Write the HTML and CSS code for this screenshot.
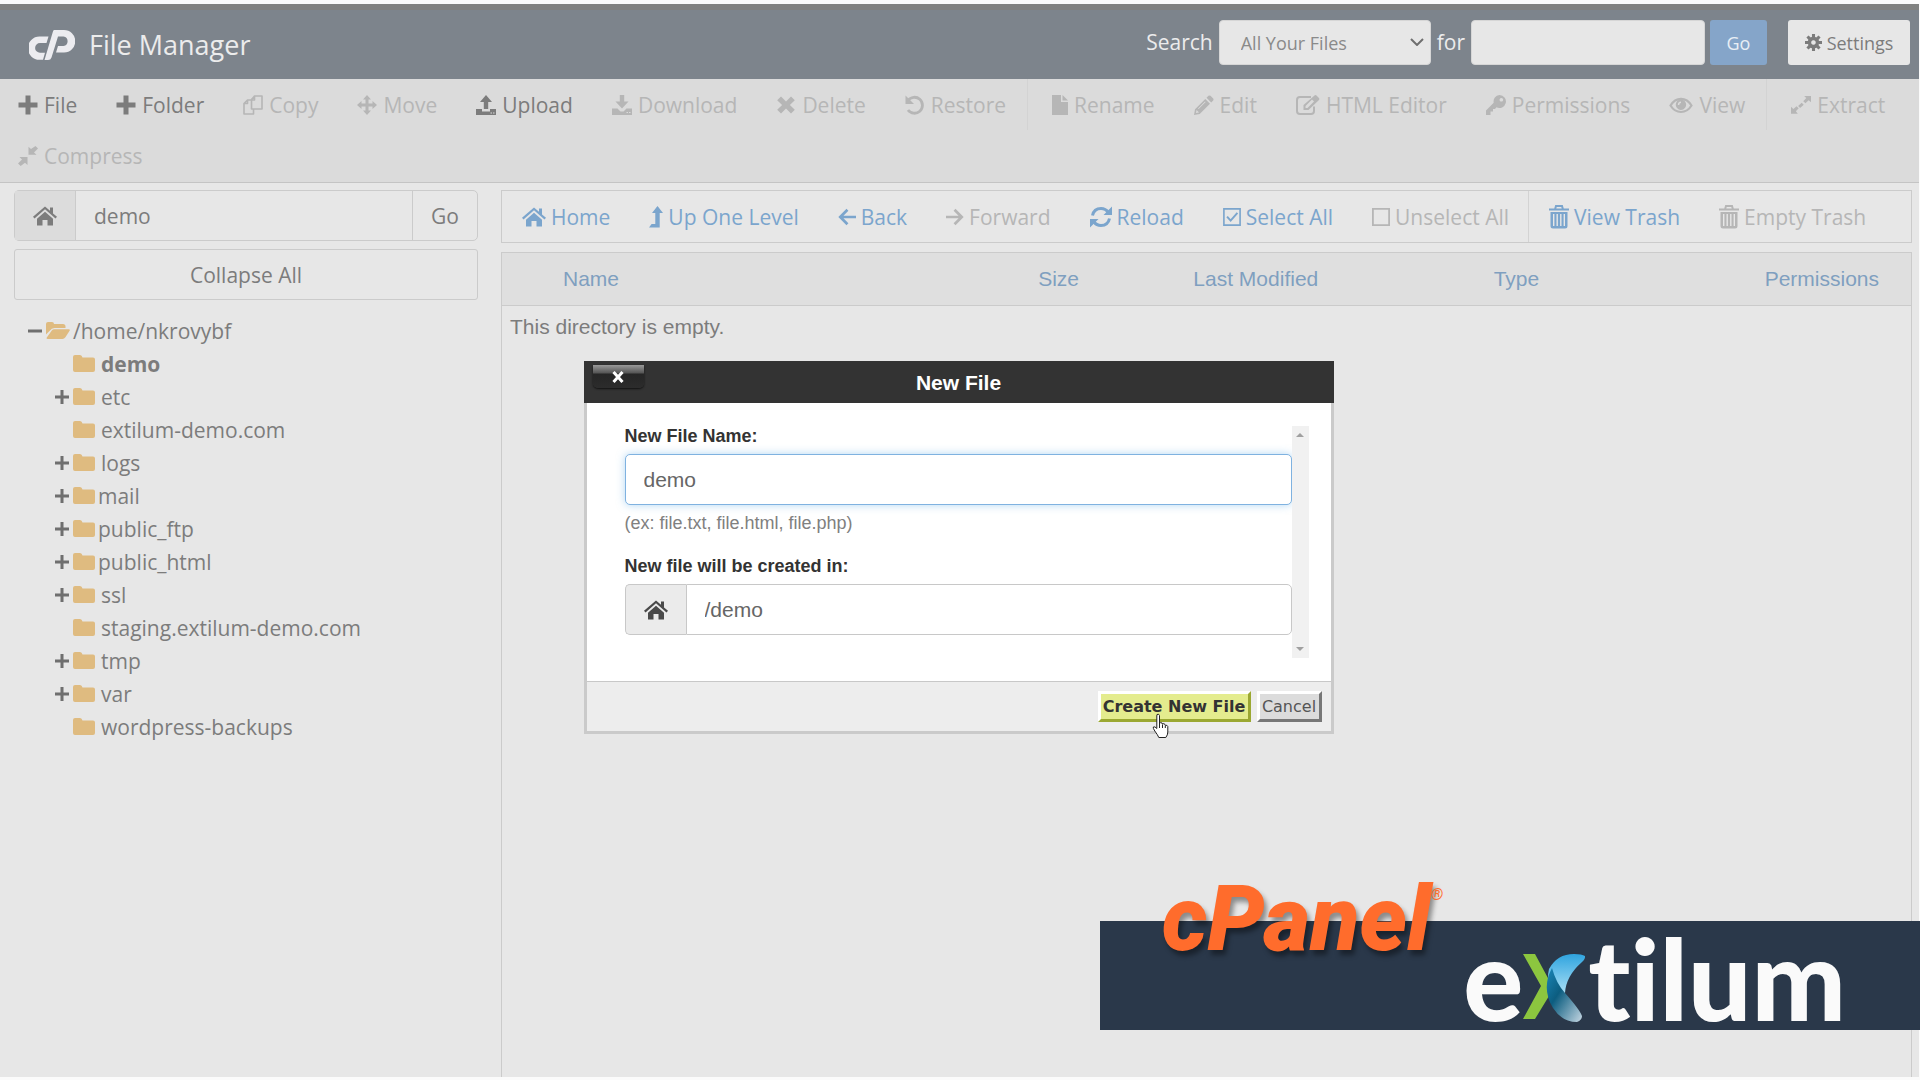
FILE: index.html
```
<!DOCTYPE html>
<html lang="en">
<head>
  <meta charset="UTF-8" />
  <meta name="viewport" content="width=device-width, initial-scale=1.0" />
  <title>cPanel File Manager</title>
  <link rel="stylesheet" href="styles.css">
</head>
<body>
  <!-- icon set -->
  <svg class="sprite" aria-hidden="true">
    <symbol id="i-plus" viewBox="0 0 20 20"><path d="M7.5 0.5h5v7h7v5h-7v7h-5v-7h-7v-5h7z"/></symbol>
    <symbol id="i-copy" viewBox="0 0 20 20"><path fill="none" stroke="currentColor" stroke-width="1.6" stroke-linejoin="round" d="M11.5 1h7.500v13h-10.500v-9.500zM11.500 1v4h-3.500M8 5h-3.500l-3.500 3.500v10.500h9.500v-4.500M4.500 5v3.500h-3.500"/></symbol>
    <symbol id="i-move" viewBox="0 0 20 20"><path d="M10 0l4 4.500h-2.500v4h4v-2.500l4.500 4-4.500 4v-2.500h-4v4h2.500l-4 4.500-4-4.500h2.500v-4h-4v2.500l-4.500-4 4.500-4v2.500h4v-4h-2.500z"/></symbol>
    <symbol id="i-upload" viewBox="0 0 20 20"><path d="M10 0l6 7h-3.800v7h-4.400v-7h-3.800zM0 14h6v2.500h8v-2.500h6v6h-20zM14.500 17.500h1.500v1h-1.500zM17 17.500h1.500v1h-1.500z" fill-rule="evenodd"/></symbol>
    <symbol id="i-download" viewBox="0 0 20 20"><path d="M7.800 0h4.400v6.500h4.300l-6.500 7-6.500-7h4.300zM0 13.500h5.500l3 3h3l3-3h5.500v6.500h-20zM14.500 17h1.500v1h-1.500zM17 17h1.500v1h-1.500z" fill-rule="evenodd"/></symbol>
    <symbol id="i-times" viewBox="0 0 20 20"><path d="M5 1.500l5 5 5-5 3.800 3.800-4.900 4.700 4.900 4.700-3.800 3.800-5-5-5 5-3.800-3.800 4.900-4.700-4.900-4.700z"/></symbol>
    <symbol id="i-undo" viewBox="0 0 20 20"><path fill="none" stroke="currentColor" stroke-width="2.800" d="M3 5.500a8 8 0 1 1 0 9.500"/><path d="M0.500 0.500v8.500h8.500z"/></symbol>
    <symbol id="i-file" viewBox="0 0 16 20"><path d="M0 0h9v7h7v13h-16zM10.500 0l5.500 5.500h-5.500z"/></symbol>
    <symbol id="i-pencil" viewBox="0 0 20 20"><path d="M14.500 0.800q1-0.800 2 0l2.700 2.700q0.800 1 0 2l-2 2-4.700-4.700zM11.300 4l4.700 4.700-10.300 10.300-5.700 1 1-5.700zM2.600 15l-0.700 3.100 3.100-0.700zM11 6.500l-7 7 0.600 0.600 7-7z" fill-rule="evenodd"/></symbol>
    <symbol id="i-edit" viewBox="0 0 24 20"><path fill="none" stroke="currentColor" stroke-width="2" d="M15 2h-11q-3 0-3 3v11q0 3 3 3h11q3 0 3-3v-4.500"/><path d="M18.500 0.500q1-0.800 2 0l2.500 2.500q0.700 1 0 2l-10.500 10h-5v-5zM9.500 11v2h2l6.500-6.500-2-2z" fill-rule="evenodd"/></symbol>
    <symbol id="i-key" viewBox="0 0 20 20"><path d="M13.500 0a6.500 6.500 0 1 1-3 12.300l-1.500 1.700h-2v2.500h-2.500v3.500h-4.500v-4.500l7.700-7.700a6.500 6.500 0 0 1 5.800-7.800zM15.300 3a1.800 1.800 0 1 0 0.100 0z" fill-rule="evenodd"/></symbol>
    <symbol id="i-eye" viewBox="0 0 24 20"><path fill="none" stroke="currentColor" stroke-width="2.200" d="M1.500 10.500q4-6.700 10.500-6.700t10.500 6.700q-4 6.500-10.500 6.500t-10.500-6.500z"/><path d="M12 4.500a5.200 5.200 0 1 1-0.100 0zM12 6.500q-3.200 0.200-3.200 3.500h1.500q0-1.900 1.700-2z" fill-rule="evenodd"/></symbol>
    <symbol id="i-expand" viewBox="0 0 22 20"><path d="M14.500 0h7.500v7l-2.600-2.300-3.500 3.500-2.400-2.300 3.300-3.500zM6.100 11.300l2.400 2.400-3.200 3.300 2.200 2.500h-7.500v-7.500l2.600 2.300zM11.800 7.500l2.200 2.100-4 3.600-2.200-2.100z"/></symbol>
    <symbol id="i-compress" viewBox="0 0 20 20"><path d="M17.500 0l2.500 2.500-4 4 2.500 2.300h-8v-8l2.500 2.200zM1.500 11h8v8l-2.500-2.300-4.300 3.300-2.700-2.500 4-4z"/></symbol>
    <symbol id="i-home" viewBox="0 0 24 20"><path d="M12 0.500l5 4.300v-3.300h3v5.900l4 3.400-1.500 1.700-10.500-9.200-10.500 9.200-1.500-1.700zM12 5.800l8 7v6.700h-5.500v-5.500h-5v5.500h-5.500v-6.700z"/></symbol>
    <symbol id="i-up" viewBox="0 0 14 22"><path d="M8.500 0l5.500 7h-3.300v14.500h-10.700l2.600-3.500h3.700v-11h-3.300z"/></symbol>
    <symbol id="i-left" viewBox="0 0 20 20"><path fill="none" stroke="currentColor" stroke-width="3" d="M20 10h-17M10.500 2l-8 8 8 8"/></symbol>
    <symbol id="i-right" viewBox="0 0 20 20"><path fill="none" stroke="currentColor" stroke-width="3" d="M0 10h17M9.500 2l8 8-8 8"/></symbol>
    <symbol id="i-reload" viewBox="0 0 22 22"><path fill="none" stroke="currentColor" stroke-width="3" d="M2.500 9.500q1.500-7 8.500-7 4.500 0 7.500 4M19.500 12.500q-1.500 7-8.500 7-4.500 0-7.500-4"/><path d="M22 0.500v8.500h-8.500zM0 21.500v-8.500h8.500z"/></symbol>
    <symbol id="i-checked" viewBox="0 0 20 20"><path fill="none" stroke="currentColor" stroke-width="1.800" d="M1 1h18v18h-18z"/><path fill="none" stroke="currentColor" stroke-width="2.200" d="M4.500 9.500l4 4.500 7.500-8.500"/></symbol>
    <symbol id="i-box" viewBox="0 0 20 20"><path fill="none" stroke="currentColor" stroke-width="2" d="M1 1h18v18h-18z"/></symbol>
    <symbol id="i-trash" viewBox="0 0 20 24"><path fill="none" stroke="currentColor" stroke-width="2" d="M0 4.500h20M6 4.500l1-3.500h6l1 3.500"/><path d="M1.500 7h17v14q0 2.500-2.500 2.500h-12q-2.500 0-2.500-2.500zM4 9v12h1.400v-12zM7.500 9v12h1.400v-12zM11.100 9v12h1.400v-12zM14.600 9v12h1.400v-12z" fill-rule="evenodd"/></symbol>
    <symbol id="i-cog" viewBox="0 0 20 20"><path fill="none" stroke="currentColor" stroke-width="4.200" d="M10 5.200a4.800 4.800 0 1 1-0.100 0z"/><path fill="none" stroke="currentColor" stroke-width="3.600" d="M10 0v4M10 16v4M0 10h4M16 10h4M2.900 2.900l2.800 2.800M14.300 14.300l2.800 2.800M17.100 2.900l-2.800 2.800M2.900 17.100l2.800-2.800"/></symbol>
    <symbol id="i-folder" viewBox="0 0 22 17"><path d="M0 2q0-2 2-2h5q2 0 2.500 2.500h10.500q2 0 2 2v10.500q0 2-2 2h-18q-2 0-2-2z"/></symbol>
    <symbol id="i-folder-open" viewBox="0 0 24 17"><path d="M0 12.500v-10.500q0-2 2-2h4q2 0 2 2h9q2.500 0 2.500 2.500v1.500h-11q-3 0-4.500 2.500zM0.800 15.500l5-7q1-1.200 2.500-1.200h14.500q1.600 0 0.800 1.500l-4.200 6.500q-1.200 1.700-3 1.700h-14.500q-2 0-1.100-1.500z"/></symbol>
    <symbol id="i-minus-s" viewBox="0 0 14 14"><path d="M0 5.500h14v3h-14z"/></symbol>
    <symbol id="i-plus-s" viewBox="0 0 14 14"><path d="M5.500 0h3v5.500h5.500v3h-5.500v5.500h-3v-5.500h-5.500v-3h5.500z"/></symbol>
  </svg>

  <header class="header">
    <div class="brand">
      <svg class="brand-logo" viewBox="0 0 46 30">
        <path d="M19.500 6.500l-2 6.500h-6.500a4.800 4.800 0 0 0 0 9.800h5l-2 7h-3.500a11.600 11.600 0 0 1 0-23.300z"/>
        <path d="M25 0h10a11.200 11.200 0 0 1 0 22.500h-8l2-6.500h5.500a4.800 4.800 0 0 0 0-9.500h-5.500l-6.500 21q-0.800 2.500-3.500 2.500h-3.500l8-27q0.700-3 1.500-3z"/>
      </svg>
      <h1>File Manager</h1>
    </div>
    <form class="search">
      <label for="scope">Search</label>
      <div class="select-wrap">
        <select id="scope"><option>All Your Files</option></select>
        <svg class="chevron" viewBox="0 0 14 8"><path d="M1 1l6 6 6-6"/></svg>
      </div>
      <label for="query">for</label>
      <input type="text" id="query" />
      <button type="button" class="btn-go">Go</button>
      <button type="button" class="btn-settings"><svg class="icon"><use href="#i-cog"/></svg>Settings</button>
    </form>
  </header>

  <nav class="toolbar">
    <button class="tool"><svg class="icon"><use href="#i-plus"/></svg>File</button>
    <button class="tool"><svg class="icon"><use href="#i-plus"/></svg>Folder</button>
    <button class="tool" disabled><svg class="icon"><use href="#i-copy"/></svg>Copy</button>
    <button class="tool" disabled><svg class="icon"><use href="#i-move"/></svg>Move</button>
    <button class="tool"><svg class="icon"><use href="#i-upload"/></svg>Upload</button>
    <button class="tool" disabled><svg class="icon"><use href="#i-download"/></svg>Download</button>
    <button class="tool" disabled><svg class="icon"><use href="#i-times"/></svg>Delete</button>
    <button class="tool" disabled><svg class="icon"><use href="#i-undo"/></svg>Restore</button>
    <span class="divider"></span>
    <button class="tool" disabled><svg class="icon narrow"><use href="#i-file"/></svg>Rename</button>
    <button class="tool" disabled><svg class="icon"><use href="#i-pencil"/></svg>Edit</button>
    <button class="tool" disabled><svg class="icon wide"><use href="#i-edit"/></svg>HTML Editor</button>
    <button class="tool" disabled><svg class="icon"><use href="#i-key"/></svg>Permissions</button>
    <button class="tool" disabled><svg class="icon wide"><use href="#i-eye"/></svg>View</button>
    <span class="divider"></span>
    <button class="tool" disabled><svg class="icon"><use href="#i-expand"/></svg>Extract</button>
    <button class="tool" disabled><svg class="icon"><use href="#i-compress"/></svg>Compress</button>
  </nav>

  <main class="main">
    <aside class="sidebar">
      <div class="path-group">
        <span class="addon"><svg class="icon wide"><use href="#i-home"/></svg></span>
        <input type="text" value="demo" aria-label="Path" />
        <button>Go</button>
      </div>
      <button class="collapse">Collapse All</button>

      <ul class="tree">
        <li class="root"><svg class="toggle"><use href="#i-minus-s"/></svg><svg class="folder open"><use href="#i-folder-open"/></svg><a href="#">/home/nkrovybf</a></li>
        <li><span class="toggle"></span><svg class="folder"><use href="#i-folder"/></svg><a href="#" class="current">demo</a></li>
        <li><svg class="toggle"><use href="#i-plus-s"/></svg><svg class="folder"><use href="#i-folder"/></svg><a href="#">etc</a></li>
        <li><span class="toggle"></span><svg class="folder"><use href="#i-folder"/></svg><a href="#">extilum-demo.com</a></li>
        <li><svg class="toggle"><use href="#i-plus-s"/></svg><svg class="folder"><use href="#i-folder"/></svg><a href="#">logs</a></li>
        <li class="special"><svg class="toggle"><use href="#i-plus-s"/></svg><svg class="folder"><use href="#i-folder"/></svg><a href="#">mail</a></li>
        <li class="special"><svg class="toggle"><use href="#i-plus-s"/></svg><svg class="folder"><use href="#i-folder"/></svg><a href="#">public_ftp</a></li>
        <li class="special"><svg class="toggle"><use href="#i-plus-s"/></svg><svg class="folder"><use href="#i-folder"/></svg><a href="#">public_html</a></li>
        <li><svg class="toggle"><use href="#i-plus-s"/></svg><svg class="folder"><use href="#i-folder"/></svg><a href="#">ssl</a></li>
        <li><span class="toggle"></span><svg class="folder"><use href="#i-folder"/></svg><a href="#">staging.extilum-demo.com</a></li>
        <li><svg class="toggle"><use href="#i-plus-s"/></svg><svg class="folder"><use href="#i-folder"/></svg><a href="#">tmp</a></li>
        <li><svg class="toggle"><use href="#i-plus-s"/></svg><svg class="folder"><use href="#i-folder"/></svg><a href="#">var</a></li>
        <li><span class="toggle"></span><svg class="folder"><use href="#i-folder"/></svg><a href="#">wordpress-backups</a></li>
      </ul>
    </aside>

    <section class="content">
      <div class="actions">
        <button class="tool"><svg class="icon wide"><use href="#i-home"/></svg>Home</button>
        <button class="tool"><svg class="icon slim"><use href="#i-up"/></svg>Up One Level</button>
        <button class="tool"><svg class="icon small"><use href="#i-left"/></svg>Back</button>
        <button class="tool" disabled><svg class="icon small"><use href="#i-right"/></svg>Forward</button>
        <button class="tool"><svg class="icon reload"><use href="#i-reload"/></svg>Reload</button>
        <button class="tool"><svg class="icon small"><use href="#i-checked"/></svg>Select All</button>
        <button class="tool" disabled><svg class="icon small"><use href="#i-box"/></svg>Unselect All</button>
        <span class="divider"></span>
        <button class="tool"><svg class="icon trash"><use href="#i-trash"/></svg>View Trash</button>
        <button class="tool" disabled><svg class="icon trash"><use href="#i-trash"/></svg>Empty Trash</button>
      </div>

      <div class="listing">
        <table>
          <thead>
            <tr>
              <th class="col-name">Name</th>
              <th class="col-size">Size</th>
              <th class="col-modified">Last Modified</th>
              <th class="col-type">Type</th>
              <th class="col-perms">Permissions</th>
            </tr>
          </thead>
          <tbody>
            <tr><td colspan="5">This directory is empty.</td></tr>
          </tbody>
        </table>
      </div>
    </section>
  </main>

  <div class="modal" role="dialog" aria-labelledby="modalTitle">
    <div class="modal-header">
      <button class="modal-close" aria-label="Close"><svg viewBox="0 0 12 12"><path d="M1.500 1l9 10M10.500 1l-9 10"/></svg></button>
      <h2 id="modalTitle">New File</h2>
    </div>
    <div class="modal-body">
      <div class="fields">
        <label for="fileName">New File Name:</label>
        <input type="text" id="fileName" class="field focused" value="demo" />
        <p class="hint">(ex: file.txt, file.html, file.php)</p>
        <label for="filePath">New file will be created in:</label>
        <div class="field-group">
          <span class="addon"><svg class="icon wide"><use href="#i-home"/></svg></span>
          <input type="text" id="filePath" class="field" value="/demo" />
        </div>
      </div>
      <div class="scrollbar"><i class="arrow-up"></i><i class="arrow-down"></i></div>
    </div>
    <div class="modal-footer">
      <button class="btn-create">Create New File</button>
      <button class="btn-cancel">Cancel</button>
    </div>
    <svg class="cursor" viewBox="0 0 18 26"><path d="M5 1.500q2-1 2.500 1v8q1-1.500 2.500-0.500l0.500 1q1.500-1 2.500 0.500l0.300 0.800q2-0.500 2.500 1.200v5.500q0 3-2 5.500h-7q-1-2.500-4-6.500-2-3-1.500-4 1.500-1 3.500 1.500v-12.500z"/><path d="M7.500 10v5M10.500 11.500v3.500M13.300 12.500v2.500"/></svg>
  </div>

  <div class="banner">
    <div class="banner-cpanel">cPanel<sup>®</sup></div>
    <div class="banner-extilum">
      <span>e</span>
      <svg class="banner-x" viewBox="0 0 63 68">
        <defs>
          <linearGradient id="gTop" x1="0" y1="0" x2="0" y2="1"><stop offset="0" stop-color="#2fa4df"/><stop offset="1" stop-color="#a9dff5"/></linearGradient>
          <linearGradient id="gLow" x1="0" y1="0" x2="1" y2="1"><stop offset="0" stop-color="#1a86b8"/><stop offset="0.400" stop-color="#0c5d80"/><stop offset="1" stop-color="#c4d6e2"/></linearGradient>
        </defs>
        <path fill="#8cc63f" d="M0 0h12l14 26v16l-14 23h-12l18-33z"/>
        <path fill="url(#gTop)" d="M62 2q0.500 3-3 6-16 14-17 31l-13-3q-6-10-3-21 8-15 25-15 8 0 11 2z"/>
        <path fill="url(#gLow)" d="M29 14q-11 20 1 40 9 14 24 14 5-2 5-6-2-6-17-23-9-10-13-25z"/>
      </svg>
      <span>tilum</span>
    </div>
  </div>
</body>
</html>
```
FILE: styles.css
```
* {
  margin: 0;
  padding: 0;
  box-sizing: border-box;
}

body {
  font-family: 'Open Sans', 'Noto Sans', sans-serif;
  font-size: 21px;
  background: #fbfbfb;
  color: #7c7c7c;
  height: 100vh;
  display: flex;
  flex-direction: column;
  padding: 4px 1px 3px 0;
  overflow: hidden;
}

button,
input,
select {
  font: inherit;
  color: inherit;
}

button {
  border: none;
  background: none;
}

.sprite {
  position: absolute;
  width: 0;
  height: 0;
}

.icon {
  width: 20px;
  height: 20px;
  flex: none;
  fill: currentColor;
}

.icon.wide {
  width: 24px;
}

.icon.narrow {
  width: 16px;
}

.icon.slim {
  width: 14px;
  height: 22px;
}

.icon.small {
  width: 18px;
  height: 18px;
}

.icon.reload {
  width: 22px;
  height: 22px;
}

.icon.trash {
  height: 24px;
}

/* header */
.header {
  display: flex;
  justify-content: space-between;
  align-items: center;
  height: 75px;
  padding: 0 9px 0 29px;
  background: #7d848c;
  border-top: 6px solid #808180;
  color: #ececec;
}

.brand {
  display: flex;
  align-items: center;
  gap: 14px;
}

.brand-logo {
  width: 46px;
  height: 30px;
  fill: #ececf0;
}

.brand h1 {
  font-size: 27px;
  font-weight: 400;
}

.search {
  display: flex;
  align-items: center;
  margin-bottom: 4px;
}

.search label {
  margin: 0 6px;
  padding-bottom: 2px;
  line-height: 24px;
}

.search select,
.search input {
  height: 45px;
  border: 1px solid #d6d6d6;
  border-radius: 4px;
  background: #e7e7e7;
}

.select-wrap {
  position: relative;
}

.search select {
  width: 212px;
  padding-left: 21px;
  font-size: 18px;
  color: #8a8a8a;
  appearance: none;
}

.chevron {
  position: absolute;
  right: 7px;
  top: 18px;
  width: 14px;
  height: 8px;
  fill: none;
  stroke: #6f6f6f;
  stroke-width: 2;
}

.search input {
  width: 234px;
}

.btn-go {
  width: 57px;
  height: 45px;
  margin-left: 5px;
  border-radius: 3px;
  background: #85a5c9;
  color: #e8eef5;
  font-size: 18px;
}

.btn-settings {
  display: flex;
  align-items: center;
  justify-content: center;
  gap: 5px;
  width: 122px;
  height: 45px;
  margin-left: 21px;
  border-radius: 3px;
  background: #e7e7e7;
  color: #7c7c7c;
  font-size: 18px;
}

.btn-settings .icon {
  width: 17px;
  height: 17px;
}

/* toolbars */
.toolbar {
  display: flex;
  flex-wrap: wrap;
  align-content: flex-start;
  min-height: 104px;
  background: #dbdbdb;
  border-bottom: 1px solid #c4c4c4;
}

.tool {
  display: flex;
  align-items: center;
  gap: 6px;
  height: 51px;
  padding: 0 21px 0 18px;
  white-space: nowrap;
}

.tool:disabled {
  color: #b6b6b6;
}

.divider {
  width: 1px;
  background: #d3d3d3;
}

.toolbar .divider {
  margin-right: 6px;
}

/* layout */
.main {
  flex: 1;
  display: flex;
  gap: 23px;
  padding: 7px 7px 0 14px;
  background: #e7e7e7;
}

.sidebar {
  width: 464px;
  flex: none;
}

.path-group {
  display: flex;
  height: 51px;
  border: 1px solid #cbcbcb;
  border-radius: 5px;
}

.addon {
  display: flex;
  align-items: center;
  justify-content: center;
  width: 61px;
  flex: none;
  background: #dcdcdc;
  border-right: 1px solid #cbcbcb;
}

.path-group input {
  flex: 1;
  min-width: 0;
  padding: 0 18px;
  border: none;
  background: none;
}

.path-group button {
  width: 65px;
  border-left: 1px solid #cbcbcb;
}

.collapse {
  display: block;
  width: 100%;
  height: 51px;
  margin-top: 8px;
  border: 1px solid #cbcbcb;
  border-radius: 3px;
}

.tree {
  list-style: none;
  margin-top: 14px;
}

.tree li {
  display: flex;
  align-items: center;
  height: 33px;
  padding-left: 41px;
}

.tree li.root {
  padding-left: 14px;
}

.tree a {
  color: inherit;
  text-decoration: none;
}

.toggle {
  width: 14px;
  height: 14px;
  margin-right: 4px;
  fill: #6f6f6f;
}

.folder {
  width: 22px;
  height: 17px;
  margin-right: 6px;
  fill: #dfbb80;
}

.folder.open {
  width: 24px;
  margin-right: 3px;
}

.special .folder {
  margin-right: 3px;
}

.tree .current {
  font-weight: 700;
}

/* directory listing */
.content {
  flex: 1;
  display: flex;
  flex-direction: column;
}

.actions {
  display: flex;
  border: 1px solid #cbcbcb;
  color: #7ba5cd;
}

.actions .tool {
  gap: 5px;
  padding: 0 19px 0 20px;
}

.listing {
  flex: 1;
  margin-top: 9px;
  border: 1px solid #cbcbcb;
  border-bottom: none;
  font-family: 'Liberation Sans', Arial, sans-serif;
}

.listing table {
  width: 100%;
  border-collapse: collapse;
  table-layout: fixed;
}

.listing th {
  height: 52px;
  background: #dfdfdf;
  border-bottom: 1px solid #cbcbcb;
  color: #7f9fc0;
  font-weight: 400;
}

.listing th.col-name {
  width: 34%;
  padding-left: 61px;
  text-align: left;
}

.col-size {
  width: 11%;
}

.col-modified {
  width: 17%;
}

.col-type {
  width: 20%;
}

.listing th.col-perms {
  width: 18%;
  padding-right: 32px;
  text-align: right;
}

.listing td {
  padding: 9px 8px;
  line-height: 24px;
}

/* new file dialog */
.modal {
  position: absolute;
  top: 361px;
  left: 0;
  right: 3px;
  width: 750px;
  margin: 0 auto;
  background: #fff;
  border: 3px solid #cacaca;
  border-top: none;
  font-family: 'Liberation Sans', Arial, sans-serif;
}

.modal-header {
  position: relative;
  height: 42px;
  margin: 0 -3px;
  background: #333;
  color: #fff;
  text-align: center;
}

.modal-header h2 {
  font-size: 21px;
  line-height: 43px;
}

.modal-close {
  position: absolute;
  left: 9px;
  top: 4px;
  width: 51px;
  height: 23px;
  background: linear-gradient(#999 0, #555 8px, #262626 9px, #2c2c2c 100%);
  border-radius: 0 0 5px 5px;
  box-shadow: 0 1px 2px #111;
}

.modal-close svg {
  display: block;
  width: 12px;
  height: 12px;
  margin: 0 auto;
  fill: none;
  stroke: #fff;
  stroke-width: 3;
}

.modal-body {
  display: flex;
  padding: 23px 22px 23px 38px;
}

.fields {
  flex: 1;
}

.fields label {
  display: block;
  color: #333;
  font-size: 18px;
  font-weight: 700;
  line-height: 20px;
}

.field {
  display: block;
  width: 100%;
  height: 51px;
  padding: 0 18px;
  border: 1px solid #c8c8c8;
  border-radius: 5px;
  color: #666;
  outline: none;
}

.field.focused {
  margin-top: 8px;
  border-color: #7fb2e0;
  box-shadow: 0 0 9px rgba(102, 175, 233, 0.5);
}

.hint {
  margin: 6px 0 21px;
  color: #808080;
  font-size: 18px;
  line-height: 24px;
}

.field-group {
  display: flex;
  height: 51px;
  margin: 8px 0 23px;
}

.field-group .addon {
  border: 1px solid #c8c8c8;
  border-right: none;
  border-radius: 5px 0 0 5px;
  background: #ebebeb;
  color: #4a4a4a;
}

.field-group .field {
  border-radius: 0 5px 5px 0;
}

.scrollbar {
  display: flex;
  flex-direction: column;
  justify-content: space-between;
  align-items: center;
  width: 17px;
  padding: 7px 0;
  background: #f1f1f1;
}

.arrow-up,
.arrow-down {
  border: 4px solid transparent;
}

.arrow-up {
  border-top: none;
  border-bottom-color: #a0a0a0;
}

.arrow-down {
  border-bottom: none;
  border-top-color: #a0a0a0;
}

.modal-footer {
  display: flex;
  justify-content: flex-end;
  gap: 6px;
  padding: 9px 9px;
  background: #ededed;
  border-top: 1px solid #c8c8c8;
  font-family: 'DejaVu Sans', Verdana, sans-serif;
}

.modal-footer button {
  height: 31px;
  border: 3px solid #fff;
  font-size: 16px;
  line-height: 24px;
}

.modal-footer .btn-create {
  width: 153px;
  background: #e4ec8e;
  border-right-color: #9ba832;
  border-bottom-color: #9ba832;
  color: #333;
  font-weight: 700;
}

.modal-footer .btn-cancel {
  width: 65px;
  background: #dcdcdc;
  border-right-color: #777;
  border-bottom-color: #777;
  color: #555;
}

.cursor {
  position: absolute;
  left: 565px;
  top: 352px;
  width: 18px;
  height: 26px;
  fill: #fff;
  stroke: #222;
}

/* sponsor banner */
.banner {
  position: absolute;
  right: 0;
  bottom: 50px;
  width: 820px;
  height: 109px;
  background: #2a384a;
}

.banner-cpanel {
  position: absolute;
  left: 62px;
  top: -46px;
  color: #ff6c2c;
  font-family: Roboto, sans-serif;
  font-size: 90px;
  font-style: italic;
  font-weight: 900;
  line-height: 90px;
  text-shadow: 3px 5px 5px rgba(0, 0, 0, 0.4);
}

.banner-cpanel sup {
  font-size: 16px;
  font-weight: 400;
  line-height: 16px;
  vertical-align: 50px;
  text-shadow: none;
}

.banner-extilum {
  position: absolute;
  right: 74px;
  bottom: 8px;
  display: flex;
  align-items: flex-end;
  color: #fafafa;
  font-family: Lato, 'Open Sans', sans-serif;
  font-size: 112px;
  font-weight: 900;
  font-variant-ligatures: none;
}

.banner-extilum span {
  line-height: 88px;
}

.banner-x {
  width: 63px;
  height: 68px;
  margin-right: 2px;
}
```
